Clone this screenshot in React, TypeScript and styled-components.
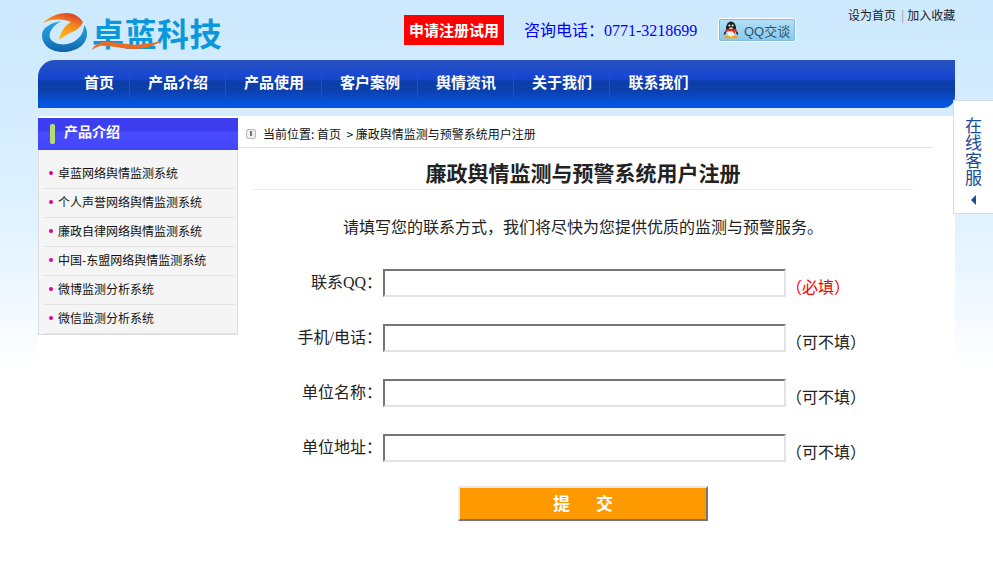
import React from 'react';
import styled, { createGlobalStyle } from 'styled-components';

const GlobalStyle = createGlobalStyle`
  html, body {
    margin: 0;
    padding: 0;
    height: 100%;
  }
  body {
    background: linear-gradient(180deg, #cde9fd 0px, #d3ecfe 100px, #e2f3ff 230px, #ffffff 370px);
    background-repeat: no-repeat;
    font-family: "Liberation Serif", "Noto Sans CJK SC", serif;
    color: #111;
    overflow: hidden;
  }
`;

const Page = styled.div`
  position: relative;
  width: 993px;
  height: 575px;
`;

const Wrapper = styled.div`
  width: 917px;
  margin-left: 38px;
`;

const Header = styled.header`
  height: 60px;
  display: flex;
  align-items: flex-start;
`;

const LogoBox = styled.div`
  position: relative;
  width: 366px;
  height: 60px;
  flex: none;
`;

const LogoText = styled.span`
  position: absolute;
  left: 54px;
  top: 12px;
  font-family: "Noto Sans CJK SC", sans-serif;
  font-size: 32px;
  line-height: 40px;
  font-weight: 700;
  letter-spacing: 0.5px;
  color: #0a97dc;
  white-space: nowrap;
`;

const LogoMark = styled.svg`
  position: absolute;
  left: 3px;
  top: 13px;
`;

const Swoosh = styled.svg`
  position: absolute;
  left: 54px;
  top: 40px;
`;

const TrialButton = styled.a`
  margin-top: 15px;
  width: 100px;
  height: 30px;
  flex: none;
  background: #ff0000;
  color: #fff;
  font-family: "Noto Sans CJK SC", sans-serif;
  font-size: 15px;
  font-weight: 700;
  line-height: 30px;
  text-align: center;
`;

const Phone = styled.div`
  margin: 17px 0 0 20px;
  width: 194px;
  flex: none;
  color: #0000ff;
  font-size: 16px;
  line-height: 24px;
  white-space: nowrap;
  span {
    font-family: "Noto Sans CJK SC", sans-serif;
  }
`;

const QQButton = styled.a`
  margin-top: 18px;
  width: 78px;
  height: 24px;
  flex: none;
  box-sizing: border-box;
  border: 1px solid #ffffff;
  border-radius: 2px;
  background: linear-gradient(180deg, #b4e0f7, #88c8ec);
  box-shadow: inset 0 0 0 1px #7fbcdc;
  display: flex;
  align-items: center;
  gap: 5px;
  padding-left: 4px;
  color: #2b5670;
  font-family: "Liberation Sans", "Noto Sans CJK SC", sans-serif;
  font-size: 13px;
  white-space: nowrap;
`;

const TopLinks = styled.div`
  margin: 7px 0 0 52px;
  flex: none;
  font-family: "Noto Sans CJK SC", sans-serif;
  font-size: 12px;
  line-height: 16px;
  white-space: nowrap;
  color: #222;
  i {
    font-style: normal;
    color: #999;
    margin: 0 3px 0 5px;
  }
`;

const Nav = styled.nav`
  height: 48px;
  display: flex;
  padding-left: 30px;
  border-radius: 17px 0 12px 0;
  background: linear-gradient(180deg, #2751bd 0px, #1a48cf 14px, #1643cc 20px, #0b3ea6 21px, #0c3faa 30px, #0554e0 44px, #0554e6 48px);
`;

const NavItem = styled.a<{ $w: number; $last?: boolean }>`
  width: ${p => p.$w}px;
  height: 30px;
  margin-top: 9px;
  flex: none;
  box-sizing: border-box;
  border-right: ${p => (p.$last ? 'none' : '1px solid #0a5fa8')};
  padding-left: 1px;
  color: #fff;
  font-family: "Noto Sans CJK SC", sans-serif;
  font-size: 15px;
  font-weight: 700;
  line-height: 26px;
  text-align: center;
`;

const Content = styled.div`
  margin-top: 8px;
  height: 459px;
  background: #fff;
  display: flex;
  align-items: flex-start;
`;

const Sidebar = styled.aside`
  width: 200px;
  margin-top: 2px;
  flex: none;
`;

const SideTitle = styled.div`
  height: 32px;
  box-sizing: border-box;
  background: linear-gradient(180deg, #3c3ef0 0, #3c3ef0 13px, #4a4cff 14px, #4246f8 32px);
  display: flex;
  align-items: center;
  gap: 9px;
  padding: 0 0 6px 12px;
  color: #fff;
  font-family: "Noto Sans CJK SC", sans-serif;
  font-size: 14px;
  font-weight: 700;
  &::before {
    content: '';
    width: 5px;
    height: 20px;
    margin-top: 6px;
    border-radius: 2px;
    background: #b4dc6e;
  }
`;

const SideList = styled.ul`
  margin: 0;
  padding: 10px 2px 0 5px;
  height: 185px;
  box-sizing: border-box;
  list-style: none;
  background: #f5f5f5;
  border: 1px solid #dddddd;
  border-top: none;
`;

const SideItem = styled.li`
  height: 29px;
  box-sizing: border-box;
  border-bottom: 1px solid #e3e3e3;
  display: flex;
  align-items: center;
  gap: 5px;
  padding: 0 0 4px 5px;
  font-family: "Noto Sans CJK SC", sans-serif;
  font-size: 12px;
  white-space: nowrap;
  color: #111;
  &::before {
    content: '';
    width: 4px;
    height: 4px;
    margin-top: 2px;
    border-radius: 50%;
    background: #e0009a;
  }
`;

const Main = styled.main`
  flex: 1;
  min-width: 0;
`;

const Breadcrumb = styled.div`
  width: 695px;
  height: 32px;
  box-sizing: border-box;
  border-bottom: 1px solid #e3e3e3;
  display: flex;
  align-items: center;
  gap: 7px;
  padding: 4px 0 0 8px;
  font-family: "Noto Sans CJK SC", sans-serif;
  font-size: 12px;
  white-space: pre;
`;

const InfoBadge = styled.span`
  width: 10px;
  height: 10px;
  box-sizing: border-box;
  border: 1px solid #bbb;
  border-radius: 2px;
  background: #eee;
  display: flex;
  align-items: center;
  justify-content: center;
  &::before {
    content: '';
    width: 2px;
    height: 5px;
    background: #777;
  }
`;

const Title = styled.h1`
  margin: 0 0 0 15px;
  width: 660px;
  height: 42px;
  box-sizing: border-box;
  border-bottom: 1px solid #e9e9e9;
  font-family: "Noto Sans CJK SC", sans-serif;
  font-size: 21px;
  font-weight: 700;
  line-height: 49px;
  text-align: center;
  color: #222;
`;

const Intro = styled.p`
  margin: 24px 0 0;
  width: 690px;
  font-family: "Noto Sans CJK SC", sans-serif;
  font-size: 16px;
  line-height: 24px;
  text-align: center;
  color: #222;
`;

const Form = styled.form`
  margin-top: 31px;
  display: flex;
  flex-direction: column;
  gap: 27px;
`;

const Row = styled.div`
  display: flex;
  align-items: center;
  height: 28px;
`;

const Label = styled.label`
  width: 144px;
  flex: none;
  text-align: right;
  font-size: 16px;
  line-height: 28px;
  color: #222;
  white-space: nowrap;
  font-family: "Liberation Serif", "Noto Sans CJK SC", serif;
`;

const TextInput = styled.input`
  margin-left: 1px;
  width: 403px;
  height: 28px;
  flex: none;
  box-sizing: border-box;
  border: 2px solid;
  border-color: #767676 #e3e3e3 #e3e3e3 #767676;
  background: #fff;
  padding: 0;
`;

const Hint = styled.span<{ $required?: boolean }>`
  margin: 6px 0 0 0;
  font-family: "Noto Sans CJK SC", sans-serif;
  font-size: 16px;
  line-height: 24px;
  white-space: nowrap;
  color: ${p => (p.$required ? '#ff0000' : '#222')};
`;

const SubmitButton = styled.button`
  margin: -3px 0 0 220px;
  width: 250px;
  height: 35px;
  box-sizing: border-box;
  border: 2px solid;
  border-color: #e8e8e8 #767676 #767676 #e8e8e8;
  background: #ff9900;
  color: #fff;
  padding: 0 0 3px;
  font-family: "Noto Sans CJK SC", sans-serif;
  font-size: 17px;
  font-weight: 700;
  word-spacing: 22px;
`;

const ServicePanel = styled.div`
  position: absolute;
  right: 0;
  top: 100px;
  width: 40px;
  height: 114px;
  box-sizing: border-box;
  border: 1px solid #cfdde9;
  border-right: none;
  background: #fff;
  display: flex;
  flex-direction: column;
  align-items: center;
  padding: 16px 1px 0 0;
  color: #1d4c92;
  &::after {
    content: '';
    margin-top: 8px;
    border-style: solid;
    border-width: 5px 5px 5px 0;
    border-color: transparent #1d4c92 transparent transparent;
  }
`;

const ServiceText = styled.span`
  writing-mode: vertical-rl;
  text-orientation: upright;
  font-family: "Noto Sans CJK SC", sans-serif;
  font-size: 17px;
  line-height: 20px;
  letter-spacing: 0.5px;
`;

const navItems = ['首页', '产品介绍', '产品使用', '客户案例', '舆情资讯', '关于我们', '联系我们'];

const products = [
  '卓蓝网络舆情监测系统',
  '个人声誉网络舆情监测系统',
  '廉政自律网络舆情监测系统',
  '中国-东盟网络舆情监测系统',
  '微博监测分析系统',
  '微信监测分析系统',
];

const fields = [
  { label: '联系QQ：', hint: '（必填）', required: true },
  { label: '手机/电话：', hint: '（可不填）' },
  { label: '单位名称：', hint: '（可不填）' },
  { label: '单位地址：', hint: '（可不填）' },
];

function Logo() {
  return (
    <LogoBox>
      <LogoMark width="47" height="40" viewBox="0 0 47 40">
        <defs>
          <linearGradient id="ring" x1="0" y1="0" x2="0" y2="1">
            <stop offset="0" stopColor="#2aa6e0" />
            <stop offset="0.6" stopColor="#1a86c8" />
            <stop offset="1" stopColor="#0f62a8" />
          </linearGradient>
          <linearGradient id="flame" x1="0.35" y1="1" x2="0.8" y2="0">
            <stop offset="0" stopColor="#fcc414" />
            <stop offset="0.55" stopColor="#f78f1e" />
            <stop offset="1" stopColor="#d9382a" />
          </linearGradient>
        </defs>
        <path d="M20 8C9 10 1 15 1 22c0 11 10 17 21 17 14 0 24-8 24-18 0-4-1-7-3-9 0 8-5 15-13 18-8 3-18 1-21-5-2-6 4-13 11-17z" fill="url(#ring)" />
        <path d="M2 10C9 3 18 0 26 0c7 0 13 4 16 9-2 6-8 9-13 11-4 2-8 5-11 7 1-6 4-13 12-18C24 6 11 5 2 10z" fill="url(#flame)" />
      </LogoMark>
      <LogoText>卓蓝科技</LogoText>
      <Swoosh width="72" height="11" viewBox="0 0 72 11">
        <path d="M0 10C2 4 10 1 18 2c12 1 22 4 34 2 8-1 14-2 19-4-7 5-17 9-29 9C30 9 16 5 8 6c-3 1-6 2-8 4z" fill="#ee6a1f" />
      </Swoosh>
    </LogoBox>
  );
}

function Penguin() {
  return (
    <svg width="16" height="18" viewBox="0 0 16 18">
      <ellipse cx="8" cy="7.5" rx="5" ry="7" fill="#1c1c1c" />
      <path d="M2.5 9.5C1 11.5.5 13 1 14l2-1.5zM13.500 9.500c1.500 2 2 3.500 1.500 4.500l-2-1.500z" fill="#1c1c1c" />
      <ellipse cx="8" cy="11.500" rx="3.900" ry="4.600" fill="#f4f1e8" />
      <circle cx="6.400" cy="4.500" r="1" fill="#fff" />
      <circle cx="9.600" cy="4.500" r="1" fill="#fff" />
      <path d="M6 6.200h4L8 7.600z" fill="#f5a81c" />
      <path d="M2.500 8h11v2.300H11.500l.8 3.200-3-3.200H2.800z" fill="#d9261c" />
      <ellipse cx="4.500" cy="16.200" rx="3.200" ry="1.400" fill="#f5a81c" />
      <ellipse cx="11.500" cy="16.200" rx="3.200" ry="1.400" fill="#f5a81c" />
    </svg>
  );
}

export default function App() {
  return (
    <Page>
      <GlobalStyle />
      <Wrapper>
        <Header>
          <Logo />
          <TrialButton>申请注册试用</TrialButton>
          <Phone>
            <span>咨询电话：</span>0771-3218699
          </Phone>
          <QQButton>
            <Penguin />
            QQ交谈
          </QQButton>
          <TopLinks>
            设为首页<i>|</i>加入收藏
          </TopLinks>
        </Header>
        <Nav>
          {navItems.map((name, i) => (
            <NavItem key={name} $w={i === 0 ? 62 : 96} $last={i === navItems.length - 1}>
              {name}
            </NavItem>
          ))}
        </Nav>
        <Content>
          <Sidebar>
            <SideTitle>产品介绍</SideTitle>
            <SideList>
              {products.map(name => (
                <SideItem key={name}>{name}</SideItem>
              ))}
            </SideList>
          </Sidebar>
          <Main>
            <Breadcrumb>
              <InfoBadge />
              当前位置: 首页  &gt; 廉政舆情监测与预警系统用户注册
            </Breadcrumb>
            <Title>廉政舆情监测与预警系统用户注册</Title>
            <Intro>请填写您的联系方式，我们将尽快为您提供优质的监测与预警服务。</Intro>
            <Form>
              {fields.map(f => (
                <Row key={f.label}>
                  <Label>{f.label}</Label>
                  <TextInput type="text" />
                  <Hint $required={f.required}>{f.hint}</Hint>
                </Row>
              ))}
              <SubmitButton type="button">提 交</SubmitButton>
            </Form>
          </Main>
        </Content>
      </Wrapper>
      <ServicePanel>
        <ServiceText>在线客服</ServiceText>
      </ServicePanel>
    </Page>
  );
}
